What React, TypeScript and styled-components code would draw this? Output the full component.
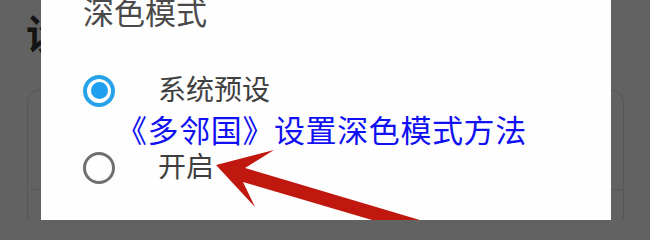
import * as React from 'react';
import styled, { createGlobalStyle } from 'styled-components';

const CJK = `"Noto Sans CJK SC", "Noto Sans", sans-serif`;

const GlobalStyle = createGlobalStyle`
  html, body {
    margin: 0;
    padding: 0;
    background: #626262;
  }
  body {
    font-family: ${CJK};
  }
`;

const Screen = styled.div`
  position: relative;
  width: 650px;
  height: 220px;
  overflow: hidden;
  background: #626262;
`;

// the settings page lying under the dimmed backdrop
const SettingsPage = styled.div`
  display: flex;
  flex-direction: column;
  padding: 12px 26px 0 26px;
`;

const PageTitle = styled.h1`
  margin: 0;
  font-size: 40px;
  line-height: 40px;
  font-weight: 700;
  color: #141414;
`;

const Card = styled.div`
  margin: 37px 0 0 1px;
  border: 1px solid #575757;
  border-radius: 14px;
  height: 200px;
`;

const CardRow = styled.div`
  height: 99px;
  margin-left: 3px;
  border-bottom: 1px solid #575757;
`;

const Dialog = styled.div`
  position: absolute;
  top: -30px;
  left: 41px;
  width: 570px;
  height: 290px;
  box-sizing: border-box;
  padding: 25px 0 0 42px;
  background: #fefefe;
  display: flex;
  flex-direction: column;
`;

const DialogTitle = styled.h2`
  margin: 0;
  font-size: 31px;
  line-height: 31px;
  font-weight: 400;
  color: #4a4a4a;
`;

const OptionList = styled.div`
  margin-top: 26px;
  display: flex;
  flex-direction: column;
`;

const OptionRow = styled.div`
  display: flex;
  align-items: center;
  gap: 43px;
  height: 77px;
`;

const Radio = styled.span<{ $checked?: boolean }>`
  width: 32px;
  height: 32px;
  box-sizing: border-box;
  border-radius: 50%;
  border: ${({ $checked }) => ($checked ? '4px solid #25a2e8' : '3px solid #6f6f6f')};
  display: flex;
  align-items: center;
  justify-content: center;
`;

const RadioDot = styled.span`
  width: 17px;
  height: 17px;
  border-radius: 50%;
  background: #1f9fef;
`;

const OptionLabel = styled.span`
  font-size: 28px;
  line-height: 28px;
  padding-bottom: 5px;
  color: #3f3f3f;
`;

const Caption = styled.div`
  position: absolute;
  top: 113px;
  left: 116px;
  font-size: 31px;
  line-height: 31px;
  letter-spacing: 0.6px;
  color: #1010f2;
  white-space: nowrap;
`;

const Arrow = styled.svg`
  position: absolute;
  left: 0;
  top: 0;
  pointer-events: none;
`;

const options = [
  { label: '系统预设', checked: true },
  { label: '开启', checked: false },
];

const App: React.FC = () => (
  <>
    <GlobalStyle />
    <Screen>
      <SettingsPage>
        <PageTitle>设置</PageTitle>
        <Card>
          <CardRow />
        </Card>
      </SettingsPage>

      <Dialog>
        <DialogTitle>深色模式</DialogTitle>
        <OptionList>
          {options.map((o) => (
            <OptionRow key={o.label}>
              <Radio $checked={o.checked}>{o.checked && <RadioDot />}</Radio>
              <OptionLabel>{o.label}</OptionLabel>
            </OptionRow>
          ))}
        </OptionList>
      </Dialog>

      <Caption>《多邻国》设置深色模式方法</Caption>

      <Arrow width="650" height="220" viewBox="0 0 650 220">
        <polygon
          points="216,165 274,150 245,168 440,226 440,240 243,182 255,207"
          fill="#c0170f"
        />
      </Arrow>
    </Screen>
  </>
);

export default App;
